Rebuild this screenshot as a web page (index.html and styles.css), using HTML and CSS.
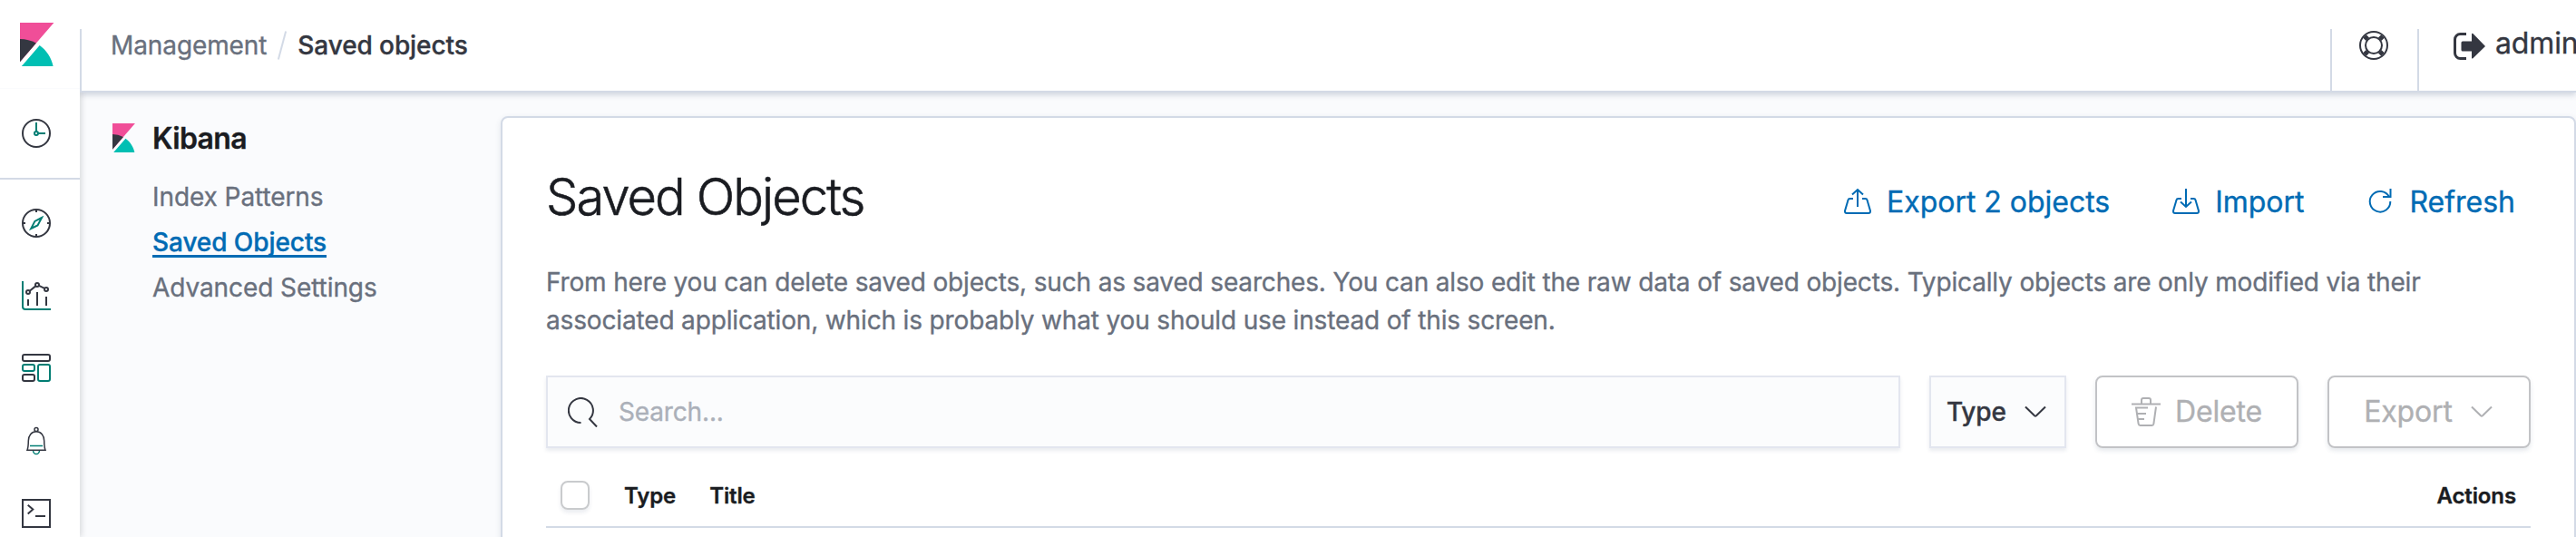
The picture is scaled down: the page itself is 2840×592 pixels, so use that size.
FILE: index.html
```html
<!DOCTYPE html>
<html lang="en">
<head>
<meta charset="utf-8">
<title>Saved Objects - Kibana</title>
<link rel="stylesheet" href="styles.css">
</head>
<body>
<svg class="defs" aria-hidden="true">
  <symbol id="logo-kibana" viewBox="0 0 32 32">
    <path fill="#f04e98" d="M4 0v28.789L28.935.017z"/>
    <path fill="#343741" d="M4 12v16.789l11.906-13.738A24.721 24.721 0 0 0 4 12"/>
    <path fill="#00bfb3" d="M18.479 16.664L6.268 30.754l-1.073 1.237h23.191c-1.252-6.292-4.883-11.719-9.908-15.327"/>
  </symbol>
</svg>
<div class="app">
  <nav class="rail">
    <a class="rail-logo"><svg class="logo-lg"><use href="#logo-kibana"/></svg></a>
    <a class="rail-recent">
      <svg class="rail-icon" viewBox="0 0 32 32"><circle cx="16" cy="16" r="15"/><g class="teal"><path d="M16 4v9.500M18.500 16H26"/><circle cx="16" cy="16" r="2"/></g></svg>
    </a>
    <div class="rail-list">
      <svg class="rail-icon" viewBox="0 0 32 32"><circle cx="16" cy="16" r="15"/><path d="M16 1v3M16 28v3M1 16h3M28 16h3"/><path class="teal" d="M22 10l-7.600 3.900L10.200 22l7.300-3.500z"/></svg>
      <svg class="rail-icon" viewBox="0 0 32 32"><path class="teal" d="M1 0v28a3 3 0 0 0 3 3h28"/><path d="M7 20v7M17 12v15M27 17v10M8.700 10.700l6.600-5.300M18.900 4.900l6.200 3"/><circle cx="7" cy="12" r="2"/><circle cx="17" cy="4" r="2"/><circle cx="27" cy="9" r="2"/></svg>
      <svg class="rail-icon" viewBox="0 0 32 32"><rect x="1" y="1" width="30" height="7" rx="2"/><rect class="teal" x="1" y="12" width="13" height="7" rx="2"/><rect x="1" y="23" width="13" height="7" rx="2"/><rect class="teal" x="18" y="12" width="13" height="18" rx="2"/></svg>
      <svg class="rail-icon bell" viewBox="0 0 32 32"><circle cx="16" cy="3.500" r="2"/><path d="M6 26.300c1.100-3 1.300-6.500 1.300-10.300 0-6 3.400-10.200 8.700-10.200s8.700 4.200 8.700 10.200c0 3.800.2 7.300 1.300 10.300z"/><path class="teal" d="M9 21.500h14M12.500 27c.3 2.200 1.700 3.500 3.500 3.500s3.200-1.300 3.500-3.500"/></svg>
      <svg class="rail-icon" viewBox="0 0 32 32"><path d="M1 1h30v30H1zM6.700 6.700l5.600 4.800-5.600 4.900M15 19h11"/></svg>
    </div>
  </nav>
  <div class="shell">
    <header class="header">
      <div class="crumbs"><a>Management</a><i class="slash"></i><strong>Saved objects</strong></div>
      <div class="header-help">
        <svg class="help-icon" viewBox="0 0 32 32"><circle cx="16" cy="16" r="15"/><circle cx="16" cy="16" r="9"/><path class="spokes" d="M9.300 9.300L6 6M22.700 9.300L26 6M9.300 22.700L6 26M22.700 22.700L26 26"/></svg>
      </div>
      <div class="header-user">
        <svg class="exit-icon" viewBox="0 0 36 30"><path class="line" d="M14 1.500H7.500a6 6 0 0 0-6 6v15a6 6 0 0 0 6 6H14"/><path class="solid" d="M20 1.500v8H10q-1.500 0-1.500 1.500v8q0 1.500 1.500 1.500h10v7.500q.4 1 1.400.3L35 15 21.400 1q-1-.6-1.400.5z"/></svg>
        <span>admin</span>
      </div>
    </header>
    <div class="body">
      <aside class="side">
        <div class="side-title"><svg class="logo-sm"><use href="#logo-kibana"/></svg><span>Kibana</span></div>
        <a>Index Patterns</a>
        <a class="active">Saved Objects</a>
        <a>Advanced Settings</a>
      </aside>
      <main class="panel">
        <div class="title-row">
          <h1>Saved Objects</h1>
          <div class="actions">
            <a class="export"><svg class="act-icon" viewBox="0 0 32 32"><path d="M11 12H7.500a2 2 0 0 0-2 1.600L2 25.500v.5a2 2 0 0 0 2 2h24a2 2 0 0 0 2-2v-.5l-3.500-11.900a2 2 0 0 0-2-1.600H21M16 21V3M10 7.500L16 2l6 5.500"/></svg>Export 2 objects</a>
            <a class="import"><svg class="act-icon" viewBox="0 0 32 32"><path d="M11 12H7.500a2 2 0 0 0-2 1.600L2 25.500v.5a2 2 0 0 0 2 2h24a2 2 0 0 0 2-2v-.5l-3.500-11.900a2 2 0 0 0-2-1.600H21M16 1v20M10 15.500l6 5.500 6-5.500"/></svg>Import</a>
            <a class="refresh"><svg class="act-icon" viewBox="0 0 32 32"><path d="M26.500 1v9H18M25 10A11.300 11.300 0 1 0 26.300 15"/></svg>Refresh</a>
          </div>
        </div>
        <p>From here you can delete saved objects, such as saved searches. You can also edit the raw data of saved objects. Typically objects are only modified via their<br>associated application, which is probably what you should use instead of this screen.</p>
        <div class="filters">
          <div class="search"><svg class="search-icon" viewBox="0 0 33 33"><path d="M14.500 28A13.500 13.500 0 1 1 24 24L32 32.500"/></svg><span>Search...</span></div>
          <div class="type"><span>Type</span><svg class="chev" viewBox="0 0 24 14"><path d="M1 1.500l10 9.800q1 .8 2 0l10-9.800"/></svg></div>
          <div class="btn delete"><svg class="trash" viewBox="0 0 32 32"><path d="M0 7.500h32M11 7.500V3q0-2 2-2h6q2 0 2 2v4.500M18 11.500H5l2.600 17.700q.3 1.800 2 1.800h12.800q1.700 0 2-1.800L27 10.500M6 18h10M7 24h7"/></svg><span>Delete</span></div>
          <div class="btn exp"><span>Export</span><svg class="chev" viewBox="0 0 24 14"><path d="M1 1.500l10 9.800q1 .8 2 0l10-9.800"/></svg></div>
        </div>
        <div class="thead"><i class="check"></i><b class="th-type">Type</b><b class="th-title">Title</b><b class="th-actions">Actions</b></div>
      </main>
    </div>
  </div>
</div>
</body>
</html>
```
FILE: styles.css
```css
* { box-sizing: border-box; }
body { margin: 0; background: #fafbfd; color: #343741; font: 28px/42px Inter, sans-serif; letter-spacing: -0.155px; overflow: hidden; -webkit-text-stroke: 0.35px; }
svg { fill: none; stroke: currentColor; stroke-width: 2; flex: none; display: block; }
.defs { position: absolute; width: 0; height: 0; }
.app { display: flex; width: 2840px; height: 592px; overflow: hidden; }

.rail { width: 88px; flex: none; background: #fff; box-shadow: 2px 0 6px rgba(52, 55, 65, .16); display: flex; flex-direction: column; }
.rail-logo { height: 98px; padding: 25px 0 0 16px; border-bottom: 1px solid #fafbfd; }
.logo-lg { width: 48px; height: 48px; stroke: none; }
.rail-recent { height: 100px; padding: 33px 0 0 24px; border-bottom: 2px solid #d3dae6; }
.rail-icon { width: 32px; height: 32px; }
.rail-list { padding: 32px 0 0 24px; display: flex; flex-direction: column; gap: 48px; }
.teal { stroke: #017d73; }
.bell { stroke-width: 1.5; }

.shell { flex: 1; min-width: 0; display: flex; flex-direction: column; }
.header { height: 102px; flex: none; background: #fff; border-bottom: 2px solid #d3dae6; box-shadow: 0 3px 6px rgba(52, 70, 105, .2); display: flex; padding-top: 32px; position: relative; z-index: 2; clip-path: inset(0 0 -20px 0); }
.crumbs { flex: 1; border-left: 2px solid #d3dae6; padding-left: 32px; display: flex; line-height: 36px; color: #69707d; letter-spacing: -0.1px; }
.slash { width: 2px; height: 32px; margin: 2px 16px 0; background: #d3dae6; transform: rotate(15deg); }
.crumbs strong { font-weight: 500; color: #343741; }
.header-help { width: 96px; border-left: 2px solid #d3dae6; padding: 2px 0 0 30px; }
.help-icon { width: 32px; height: 32px; }
.spokes { stroke-width: 5; }
.header-user { width: 175px; border-left: 2px solid #d3dae6; padding-left: 38px; display: flex; line-height: 31px; font-size: 32px; white-space: nowrap; }
.exit-icon { width: 36px; height: 30px; margin: 4px 10px 0 0; }
.exit-icon .line { stroke-width: 3; }
.exit-icon .solid { fill: currentColor; stroke: none; }

.body { flex: 1; display: flex; min-height: 0; padding-top: 26px; }
.side { width: 464px; flex: none; padding-left: 32px; color: #69707d; }
.side-title { display: flex; align-items: center; height: 48px; font-size: 32px; font-weight: 600; color: #1a1c21; letter-spacing: -0.65px; margin-bottom: 24px; }
.side-title span { padding-top: 1px; }
.logo-sm { width: 32px; height: 32px; stroke: none; margin-right: 16px; }
.side a { display: block; width: fit-content; margin-left: 48px; line-height: 34px; height: 34px; margin-bottom: 16px; letter-spacing: -0.08px; }
.side .active { color: #006bb4; font-weight: 500; border-bottom: 3px solid #006bb4; }

.panel { width: 2288px; height: 500px; flex: none; background: #fff; border: 2px solid #d3dae6; border-radius: 8px; padding: 0 48px; box-shadow: 0 2px 6px rgba(52, 70, 105, .12); }
.title-row { display: flex; justify-content: space-between; height: 160px; }
h1 { margin: 47px 0 0; font-weight: 300; font-size: 56px; line-height: 80px; letter-spacing: -1.92px; color: #1a1c21; -webkit-text-stroke: 0.6px; }
.actions { display: flex; align-items: flex-start; padding: 72px 17px 0 0; font-size: 32px; letter-spacing: -0.02px; line-height: 42px; color: #006bb4; }
.actions a { display: flex; align-items: center; height: 42px; }
.act-icon { width: 32px; height: 32px; margin-right: 16px; }
.export { margin-right: 68px; }
.import { margin-right: 68px; }
p { margin: 0; color: #69707d; line-height: 42px; white-space: nowrap; }
.filters { display: flex; height: 80px; margin-top: 40px; }
.search, .type { background: #fbfcfd; border: 2px solid #e3e6ef; box-shadow: 0 3px 4px rgba(52, 70, 105, .1); display: flex; align-items: center; }
.search { width: 1493px; margin-right: 32px; padding-left: 22px; color: #abb0b9; }
.search-icon { width: 33px; height: 33px; color: #343741; margin-right: 23px; }
.type { width: 151px; margin-right: 32px; padding-left: 17px; font-weight: 500; }
.chev { width: 24px; height: 14px; margin-left: 20px; }
.btn { width: 224px; border: 2px solid #c2c3c6; border-radius: 8px; box-shadow: 0 3px 5px rgba(52, 70, 105, .12); color: #afb0b3; font-size: 32px; display: flex; align-items: center; justify-content: center; padding-right: 2px; }
.delete { margin-right: 32px; padding-right: 0; }
.trash { width: 32px; height: 32px; margin-right: 16px; }
.thead { display: flex; height: 88px; border-bottom: 2px solid #d3dae6; align-items: center; padding: 18px 16px 0; font-size: 24px; color: #1a1c21; letter-spacing: -0.12px; }
.thead b { font-weight: 600; padding-top: 1px; }
.check { width: 32px; height: 32px; border: 2px solid #c9cbcd; border-radius: 8px; box-shadow: 0 3px 4px rgba(52, 70, 105, .1); margin-right: 38px; }
.th-type { margin-right: 37px; }
.th-actions { margin-left: auto; }
```
